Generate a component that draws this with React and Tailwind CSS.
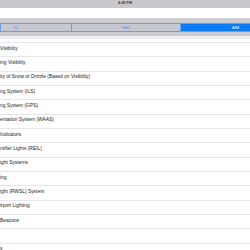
import React from 'react';

const rows = [
  'Visibility',
  'ing Visibility',
  'ity of Snow or Drizzle (Based on Visibility)',
  'ng System (ILS)',
  'ng System (GPS)',
  'entation System (WAAS)',
  'Indicators',
  'ntifier Lights (REIL)',
  'ight Systems',
  'ing',
  'ight (RWSL) System',
  'irport Lighting',
  'Beacons',
  '',
  's',
];

const App = () => {
  return (
    <div
      className="w-[250px] h-[250px] overflow-hidden bg-white flex flex-col"
      style={{ fontFamily: '"Liberation Sans", Arial, sans-serif' }}
    >
      {/* Status bar */}
      <div className="h-[8px] shrink-0 bg-[#c8c8cc] flex items-center justify-center text-[3.7px] leading-none font-semibold text-[#3a3a3a]">
        4:28 PM
      </div>

      {/* Nav bar */}
      <div className="h-[10px] shrink-0 bg-white" />

      {/* Segmented control */}
      <div className="h-[18px] shrink-0 bg-[#cbcbd0] pt-[5px]">
        <div className="h-[9px] flex border-y border-l border-[#6a9fe4] text-[4px] leading-none">
          <div className="w-[70px] shrink-0 bg-[#c5c7d1] flex items-center pl-[13px] text-[#5c98e8]">RI</div>
          <div className="w-[110px] shrink-0 bg-[#c5c7d1] border-x border-[#6a9fe4] flex items-center justify-center text-[#5c98e8]">FAR</div>
          <div className="flex-1 bg-[#0a7cf5] flex items-center justify-end pr-[11px] text-white">AIM</div>
        </div>
      </div>

      <div className="h-[3px] shrink-0 bg-[#efeff3]" />
      <div className="h-[3px] shrink-0 bg-white" />

      {/* List */}
      <div className="flex flex-col">
        {rows.map((r, i) => (
          <div
            key={i}
            className="h-[14.35px] shrink-0 border-t border-[#e6e6e8] pt-[2.5px] text-[4.9px] leading-[5px] text-[#222] whitespace-nowrap"
          >
            {r}
          </div>
        ))}
      </div>
    </div>
  );
};

export default App;
